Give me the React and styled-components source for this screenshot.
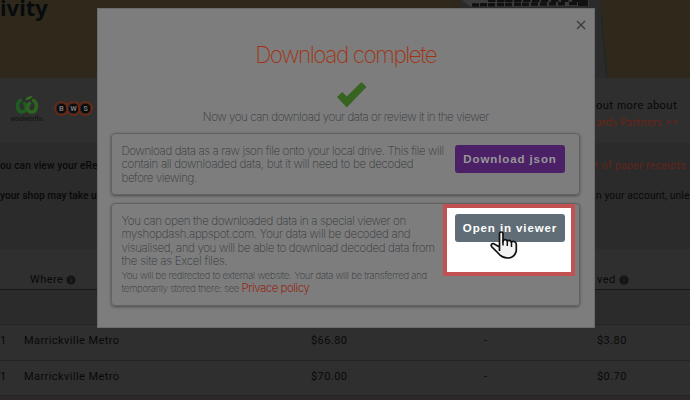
import React from 'react';
import styled, { createGlobalStyle } from 'styled-components';

const Global = createGlobalStyle`
  * { box-sizing: border-box; }
  body { margin: 0; background: #2f2f2f; overflow: hidden; }
`;

const Page = styled.div`
  position: relative;
  width: 690px;
  height: 400px;
  overflow: hidden;
  display: flex;
  flex-direction: column;
  background: #2f2f2f;
  color: #090909;
  font-family: Roboto, sans-serif;
`;
const Banner = styled.header`
  height: 78px;
  flex: none;
  display: flex;
  justify-content: space-between;
  background: #2f291c;
`;
const Heading = styled.h1`
  margin: 0;
  height: 30px;
  font: 700 22px/14px 'Noto Sans', sans-serif;
  color: #080b0e;
`;
const Partners = styled.section`
  height: 55px;
  flex: none;
  display: flex;
  justify-content: space-between;
  padding: 17px 13px 0 10px;
`;
const Logos = styled.div`
  display: flex;
  gap: 10px;
`;
const PartnerText = styled.div`
  width: 81px;
  margin-top: 1px;
  font: 400 11.2px/17px Lato, sans-serif;
  white-space: nowrap;
`;
const PartnerLine = styled.div`
  letter-spacing: ${(p) => (p.$link ? 0.1 : 0.38)}px;
  color: ${(p) => (p.$link ? '#6a2417' : '#070707')};
`;
const Notice = styled.section`
  height: 106px;
  flex: none;
  margin-top: 10px;
  padding-top: 14px;
  background: #2b2b2b;
`;
const NoticeLine = styled.div`
  display: flex;
  justify-content: space-between;
  height: 30px;
  font-weight: 500;
  font-size: 10.2px;
  line-height: 18px;
  letter-spacing: ${(p) => p.$ls}px;
  white-space: nowrap;
`;
const NoticeEnd = styled.span`
  width: ${(p) => (p.$link ? 95 : 94)}px;
  letter-spacing: ${(p) => (p.$link ? 0.45 : 0.15)}px;
  font-weight: 400;
  color: ${(p) => (p.$link ? '#66231a' : '#090909')};
`;
const Table = styled.section`
  flex: none;
  margin-top: 21px;
`;
const Row = styled.div`
  display: grid;
  grid-template-columns: 24px 287px 173px 113px 93px;
  align-items: center;
  height: ${(p) => p.$h}px;
  padding-bottom: ${(p) => p.$pb ?? 3}px;
  border-bottom: 1px solid ${(p) => p.$line || '#242424'};
  background: ${(p) => p.$bg || 'transparent'};
  font-size: 11px;
  letter-spacing: 0.42px;
  white-space: nowrap;
`;
const HeadCell = styled.div`
  display: flex;
  align-items: center;
  gap: 3px;
  padding-left: ${(p) => p.$inset || 0}px;
  color: #090909;
`;
const Footer = styled.div`
  height: 5px;
  background: #2d2727;
`;

const Modal = styled.div`
  position: absolute;
  left: 96.5px;
  top: 7.5px;
  width: 498.5px;
  height: 320px;
  padding: 0 14px;
  background: #7d7d7d;
  border: 1px solid #6a6c6e;
  color: #34383b;
  font-family: Inter, sans-serif;
`;
const CloseRow = styled.div`
  height: 26px;
  display: flex;
  justify-content: flex-end;
  padding: 11px 0 0;
  margin-right: -6px;
`;
const Title = styled.h2`
  margin: 6px 0 0;
  font-size: 22.5px;
  line-height: 28px;
  font-weight: 200;
  letter-spacing: -1.45px;
  text-align: center;
  color: #a03412;
`;
const CheckRow = styled.div`
  height: 26px;
  margin-top: 13px;
  display: flex;
  justify-content: center;
  padding-left: 13px;
`;
const Subtitle = styled.p`
  margin: 2px 0 0;
  height: 23px;
  font-size: 11.5px;
  line-height: 14px;
  font-weight: 200;
  letter-spacing: -0.4px;
  text-align: center;
`;
const Card = styled.div`
  display: flex;
  justify-content: space-between;
  height: ${(p) => p.$h}px;
  margin-bottom: 8px;
  margin-left: -0.5px;
  padding: 11px 14px 0 9.5px;
  border: 1px solid #626262;
  border-radius: 4px;
  box-shadow: 0 1px 3px rgba(0, 0, 0, 0.4);
`;
const Copy = styled.div`
  font-size: 11.5px;
  line-height: 13.6px;
  font-weight: 200;
  white-space: nowrap;
`;
const Line = styled.div`
  letter-spacing: ${(p) => p.$ls || 0}px;
`;
const Small = styled.div`
  font-size: 9.6px;
  line-height: 13px;
  letter-spacing: ${(p) => p.$ls || 0}px;
`;
const Link = styled.a`
  font-size: 11.5px;
  font-weight: 300;
  letter-spacing: -0.5px;
  color: #932a18;
`;
const Button = styled.button`
  flex: none;
  width: 110px;
  height: 28px;
  padding: 0;
  border: 0;
  border-radius: 3px;
  background: ${(p) => (p.$primary ? '#4c2066' : '#606d76')};
  color: ${(p) => (p.$primary ? '#989898' : '#fff')};
  font: 700 11.5px/28px 'Liberation Sans', sans-serif;
  letter-spacing: ${(p) => (p.$primary ? 0.9 : 0.9)}px;
  white-space: nowrap;
`;
const Spotlight = styled.div`
  position: absolute;
  left: 443px;
  top: 204px;
  width: 132px;
  height: 72px;
  padding: 6px 6px 0 8px;
  border: 4px solid #c25252;
  background: #fff;
`;
const Cursor = styled.svg`
  position: absolute;
  left: 43px;
  top: 23px;
`;

const Keyboard = () => (
  <svg width="230" height="78" viewBox="460 0 230 78">
    <path d="M460 0H600L607 78H460Z" fill="#2b2b2b" />
    <path d="M601 14L607 78" stroke="#20242c" />
    <path d="M462 0H589V6L471 7Z" fill="#3b3b3b" />
    <g fill="#111">
      {[472, 480, 488, 497, 505, 514, 522, 531, 540, 549, 558, 569].map((x, i) => (
        <rect key={x} x={x} y={3.2 - i * 0.13} width={i > 10 ? 8 : 7} height="3.5" rx=".6" />
      ))}
      {[488, 497, 505, 514, 523, 532, 541, 551, 561, 572].map((x) => (
        <rect key={x} x={x} y="0" width="7.5" height="2" rx=".5" />
      ))}
      <rect x="578" y="0" width="10" height="6" />
    </g>
  </svg>
);

const Woolworths = () => (
  <svg width="34" height="30" viewBox="0 0 34 30">
    <g fill="none" strokeWidth="3.600" strokeLinecap="round">
      <path d="M10.500 5.500C5.500 9 7.500 17 12 17C16 17 17.500 11.500 14.500 8.500" stroke="#1f5c22" />
      <path d="M23.500 5.500C28.500 9 26.500 17 21.500 17C17.500 17 16 11.500 19.500 8.500" stroke="#2c6420" />
    </g>
    <path d="M15.500 5Q16 1 22.500 1Q21.500 5 15.500 5" fill="#356c22" />
    <text x="0.500" y="26" fontSize="6.800" fontFamily="Lato" textLength="32.500" lengthAdjust="spacingAndGlyphs" fill="#0b120c">woolworths</text>
  </svg>
);

const Bws = () => (
  <svg width="40" height="28" viewBox="0 0 40 28">
    {['B', 'W', 'S'].map((c, i) => (
      <g key={c}>
        <circle cx={7.500 + i * 12} cy="13.500" r="6.500" fill="#0b0b0e" stroke="#74280f" strokeWidth="1.700" />
        <circle cx={7.500 + i * 12} cy="13.500" r="5.200" fill="#0b0b0e" stroke="#4b4b4b" strokeWidth=".5" />
        <text x={7.500 + i * 12} y="16.200" textAnchor="middle" fontSize="7.500" fontWeight="700" fontFamily="Roboto" fill="#777">{c}</text>
      </g>
    ))}
  </svg>
);

const Info = () => (
  <svg width="10" height="10" viewBox="0 0 10 10">
    <circle cx="5" cy="5" r="4.600" fill="#141414" />
    <path d="M5 2.300V3.300M5 4.300V7.500" stroke="#2a2a2a" strokeWidth="1.100" fill="none" />
  </svg>
);

const rows = [
  ['1', 'Marrickville Metro', '$66.80', '-', '$3.80'],
  ['1', 'Marrickville Metro', '$70.00', '-', '$0.70'],
];

export default function App() {
  return (
    <>
      <Global />
      <Page>
        <Banner>
          <Heading>ivity</Heading>
          <Keyboard />
        </Banner>
        <Partners>
          <Logos><Woolworths /><Bws /></Logos>
          <PartnerText>
            <PartnerLine>out more about</PartnerLine>
            <PartnerLine $link>ards Partners &gt;&gt;</PartnerLine>
          </PartnerText>
        </Partners>
        <Notice>
          <NoticeLine $ls={0.08}><span>ou can view your eRe</span><NoticeEnd $link>t of paper receipts</NoticeEnd></NoticeLine>
          <NoticeLine $ls={-0.02}><span>your shop may take u</span><NoticeEnd>n your account, unle</NoticeEnd></NoticeLine>
        </Notice>
        <Table>
          <Row $h={20} $pb={0} $line="#181818">
            <span /><HeadCell $inset={6}>Where <Info /></HeadCell><span /><span />
            <HeadCell>ved <Info /></HeadCell>
          </Row>
          <Row $h={35} $bg="#2b2b2b" />
          {rows.map((r) => (
            <Row $h={35.7} key={r[2]}>{r.map((c, i) => <span key={i}>{c}</span>)}</Row>
          ))}
          <Footer />
        </Table>
        <Modal>
          <CloseRow>
            <svg width="10" height="10" viewBox="0 0 10 10"><path d="M1 1L9 9M9 1L1 9" stroke="#34383b" strokeWidth="1.100" /></svg>
          </CloseRow>
          <Title>Download complete</Title>
          <CheckRow>
            <svg width="30" height="26" viewBox="0 0 30 26"><path d="M0 15L5.300 10L9.700 14.600L24.500 0L29.500 5L9.700 25.500Z" fill="#386421" /></svg>
          </CheckRow>
          <Subtitle>Now you can download your data or review it in the viewer</Subtitle>
          <Card $h={62}>
            <Copy>
              <Line $ls={-0.37}>Download data as a raw json file onto your local drive. This file will</Line>
              <Line $ls={-0.29}>contain all downloaded data, but it will need to be decoded</Line>
              <Line $ls={-0.4}>before viewing.</Line>
            </Copy>
            <Button $primary>Download json</Button>
          </Card>
          <Card $h={103}>
            <Copy>
              <Line $ls={-0.35}>You can open the downloaded data in a special viewer on</Line>
              <Line $ls={-0.31}>myshopdash.appspot.com. Your data will be decoded and</Line>
              <Line $ls={-0.34}>visualised, and you will be able to download decoded data from</Line>
              <Line $ls={-0.24}>the site as Excel files.</Line>
              <Small $ls={-0.27}>You will be redirected to external website. Your data will be transferred and</Small>
              <Small $ls={-0.27}>temporarily stored there: see <Link>Privace policy</Link></Small>
            </Copy>
          </Card>
        </Modal>
        <Spotlight>
          <Button>Open in viewer</Button>
          <Cursor width="28" height="30" viewBox="490 231 28 30">
            <path d="M499.500 251V234Q499.500 232 501.300 232Q503 232 503 234V241Q504 239.300 506 239.800L507.500 241Q509.500 239.500 511 241.800Q515.500 240.500 516.300 244V251Q514.500 258 507.500 258Q502 258 498 253L491.500 246.500Q490.500 243.500 493.500 243.500L499.500 247Z" fill="#f3f3f3" stroke="#111" strokeWidth="1.700" />
            <path d="M503 240V245.500M507.300 241V246M511.500 242V247" stroke="#111" strokeWidth="1.500" />
          </Cursor>
        </Spotlight>
      </Page>
    </>
  );
}
